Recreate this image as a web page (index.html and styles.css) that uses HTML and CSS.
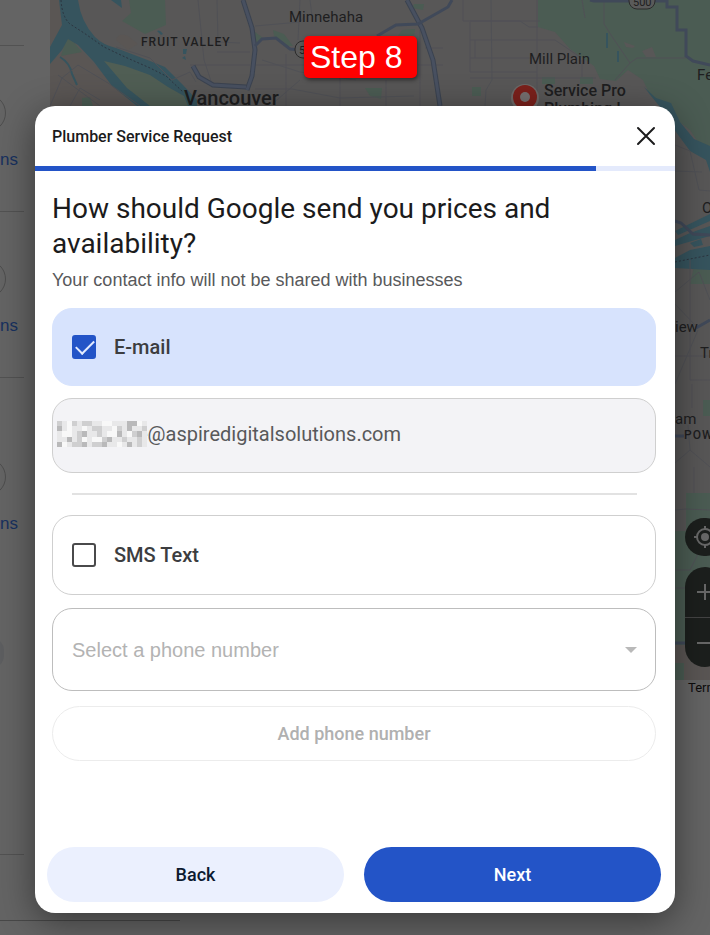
FILE: index.html
```html
<!DOCTYPE html>
<html lang="en">
<head>
<meta charset="utf-8">
<meta name="viewport" content="width=device-width, initial-scale=1">
<title>Plumber Service Request</title>
<link rel="stylesheet" href="styles.css">
</head>
<body>
<div class="backdrop">
  <ul class="results">
    <li class="result result-first"></li>
    <li class="result"><span class="ring"></span><a class="directions" href="#">ns</a></li>
    <li class="result"><span class="ring"></span><a class="directions" href="#">ns</a></li>
    <li class="result result-tall"><span class="ring"></span><a class="directions" href="#">ns</a><span class="dot"></span></li>
    <li class="result-footer"></li>
  </ul>
  <div class="map-pane">
    <svg class="map" viewBox="50 0 660 680" preserveAspectRatio="xMinYMin slice" role="img" aria-label="Map">
      <rect class="land" x="50" y="0" width="2000" height="680"/>
      <path class="sand" d="M50 0H60L63 25 50 45ZM50 64L60 54 82 52 135 106H50Z"/>
      <path class="sand" d="M116 40Q118 32 128 36L138 44 128 50Z"/>
      <path class="green" d="M129 0H165L166 25 145 34 122 21 131 13ZM66 39H71L82 52 61 56ZM82 98L90 97 93 106H82Z"/>
      <path class="green" d="M538 0H2050V160H710L690 130 664 110 650 95 643 80 628 70 616 81 600 79 594 66 570 49 555 32 538 27Z"/>
      <path class="green" d="M542 77H555V84H542ZM580 77H593V84H580ZM472 87H481V96H472ZM365 88H382L381 99 370 96ZM273 30L284 34 293 46 286 46 274 36ZM255 32L263 38 255 43ZM414 4L424 4 423 10 412 8ZM402 30L415 29 414 37 398 36Z"/>
      <path class="land" d="M624 42L635 46 633 48 626 47ZM642 51L652 47 656 57 646 57Z"/>
      <path class="green" d="M686 493H2050V645H675V531H686ZM703 400H710V416H703ZM695 262H710V284H690Z"/>
      <path class="sand" d="M675 645H710V680H675Z"/>
      <path class="green" d="M675 663H684V680H675Z"/>
      <path class="water" d="M59 0H78Q81 22 95 37 103 45 116 48L150 61 165 67 183 85 197 100V106H137L112 86 94 62 78 45 68 39 62 50 50 64V47L62 25Z"/>
      <path class="island" d="M104 61L125 66 150 75 168 87 184 96 188 106H150L127 88Z"/>
      <path class="water" d="M111 0L122 8 121 0ZM157 31Q160 29 163 34L161 35ZM183 49H187L186 54H183ZM182 58L185 56 186 60ZM606 33H608V48H606ZM617 51H619V62H617Z"/>
      <path class="water" d="M644 87L656 98 671 103 680 122 694 139 710 146V172L706 160 690 151 676 132 664 112Z"/>
      <path class="water" d="M675 240L690 233 710 226V236L692 241 675 246ZM675 258L690 250 710 246V270L675 268ZM675 231L710 214V221L678 235ZM690 243L701 239 703 245 694 247Z"/>
      <path class="stream" d="M60 57Q70 63 72 74L77 85M140 106Q136 101 143 102"/>
      <path class="border-line" d="M61 0Q62 17 70 24L84 33 104 47 125 57 150 68 166 76 183 92M675 262L710 255"/>
      <g class="street">
        <path d="M50 106L62 78 78 65 108 83 140 106M58 75L100 106M70 106L80 88 100 100M116 47L150 58 172 80 190 72 196 82M198 0L204 60 212 84M217 0L218 42 240 43M190 65H250M217 52H250M300 0L298 40M255 26L300 22 305 16M310 0L312 16M255 65H304M262 60L300 72 356 80M270 106L300 80M286 106V54M340 78V106M420 30V106M418 65H443M463 0V21H540M470 22V72H537M386 106V80M425 48H443M255 89H292L340 98 414 96"/>
        <path d="M491 0L492 80 486 90 485 106M470 21H520L529 27H538M470 40H555L580 57M537 0V106M470 58H540M470 78H596M475 40V58M604 0V24L613 38 630 63 637 58H686M630 63L615 80M582 0L585 18M582 60V77"/>
        <path d="M675 145L690 151 699 190 710 191M675 171L702 172M675 292L699 272 710 300M675 304L695 325M690 260V380H710M675 356H710M675 384L698 330M692 384V408M675 463L690 450 688 425M690 450L710 467M675 510L686 509 710 510M694 467V493M700 550L690 570H675M675 588H710"/>
      </g>
      <path class="highway-edge" d="M243 0L252 28 255 50 252 76 247 90M193 66L199 77 213 85 246 87M407 0L422 28 433 60 440 106"/>
      <path class="highway" d="M243 0L252 28 255 50 252 76 247 90M193 66L199 77 213 85 246 87M407 0L422 28 433 60 440 106"/>
      <path class="route" d="M255 46L262 39 276 38 290 49 300 50M377 36L396 25 418 24 448 7 452 0M590 0L594 1H667V7H677V30H686V56L693 61 710 65M675 221L681 223 693 234 710 235M696 328L710 320M675 436H684M675 643H710"/>
      <rect class="shield" x="295" y="41" width="24" height="17" rx="8"/>
      <text class="shield-text" x="299" y="54">5</text>
      <rect class="shield" x="629" y="-8" width="26" height="17" rx="8"/>
      <text class="shield-text" x="633" y="6">500</text>
      <g class="place">
        <text x="289" y="22">Minnehaha</text>
        <text x="529" y="64">Mill Plain</text>
        <text x="697" y="80">Fe</text>
        <text x="702" y="213">O</text>
        <text x="675" y="332">iew</text>
        <text x="700" y="358">Tr</text>
        <text x="675" y="424">am</text>
      </g>
      <text class="district" x="141" y="46">FRUIT VALLEY</text>
      <text class="district" x="684" y="439">POW</text>
      <text class="city" x="184" y="105">Vancouver</text>
      <circle class="pin-halo" cx="525" cy="98" r="14"/>
      <circle class="pin" cx="525" cy="97" r="12"/>
      <circle class="pin-eye" cx="525" cy="97" r="5"/>
      <text class="business" x="544" y="96">Service Pro</text>
      <text class="business" x="544" y="114">Plumbing I</text>
    </svg>
    <div class="map-controls">
      <button class="locate" type="button" aria-label="Show your location">
        <svg viewBox="0 0 24 24" width="24" height="24"><circle cx="12" cy="12" r="8"/><circle class="core" cx="12" cy="12" r="4"/><path d="M12 1v3M12 20v3M1 12h3M20 12h3"/></svg>
      </button>
      <div class="zoom">
        <button type="button" aria-label="Zoom in"><svg viewBox="0 0 20 20" width="20" height="20"><path d="M10 2v16M2 10h16"/></svg></button>
        <button type="button" aria-label="Zoom out"><svg viewBox="0 0 20 20" width="20" height="20"><path d="M2 10h16"/></svg></button>
      </div>
      <a class="terms" href="#">Terms</a>
    </div>
  </div>
</div>

<div class="step-badge">Step 8</div>

<main class="dialog" role="dialog" aria-labelledby="dialog-title">
  <header class="dialog-header">
    <h1 class="dialog-title" id="dialog-title">Plumber Service Request</h1>
    <button class="close" type="button" aria-label="Close">
      <svg viewBox="0 0 20 20" width="20" height="20"><path d="M2 2L18 18M18 2L2 18"/></svg>
    </button>
  </header>
  <div class="progress"><div class="progress-value"></div></div>
  <form class="form">
    <h2 class="question">How should Google send you prices and availability?</h2>
    <p class="hint">Your contact info will not be shared with businesses</p>

    <label class="option option-selected">
      <input class="check" type="checkbox" checked>
      <span>E-mail</span>
    </label>
    <div class="email-field">
      <svg class="mosaic" viewBox="0 0 18 5" width="90" height="26" preserveAspectRatio="none" shape-rendering="crispEdges" aria-hidden="true">
        <path fill="#e8e8e9" d="M0 0H18V5H0Z"/>
        <path fill="#f8f8f8" d="M2 0h1v2h-1zM5 1h1v1h-1zM9 0h2v1h-2zM1 2h2v1h-2zM7 3h2v1h-2zM11 1h1v2h-1zM14 2h1v1h-1zM1 4h1v1h-1zM5 3h1v1h-1zM12 4h1v1h-1zM16 0h1v1h-1zM10 2h1v1h-1z"/>
        <path fill="#cfcfd0" d="M0 0h1v1h-1zM3 0h1v1h-1zM5 0h2v1h-2zM8 1h1v2h-1zM12 1h1v1h-1zM15 2h1v1h-1zM4 2h1v2h-1zM7 1h1v1h-1zM9 3h2v1h-2zM16 3h1v2h-1zM3 4h2v1h-2zM7 4h2v1h-2zM17 1h1v1h-1zM13 3h1v1h-1z"/>
        <path fill="#b9b9ba" d="M0 1h1v1h-1zM2 3h1v1h-1zM5 2h1v1h-1zM12 2h1v1h-1zM14 0h2v1h-2zM14 1h1v1h-1zM9 4h1v1h-1zM14 4h1v1h-1zM10 3h1v1h-1zM5 4h1v1h-1zM0 4h1v1h-1zM16 2h1v1h-1z"/>
      </svg>
      <input class="email-input" type="email" aria-label="E-mail address" value="e@aspiredigitalsolutions.com" readonly>
    </div>

    <hr class="divider">

    <label class="option">
      <input class="check" type="checkbox">
      <span>SMS Text</span>
    </label>
    <div class="select-field">
      <select class="select" aria-label="Phone number">
        <option>Select a phone number</option>
      </select>
      <svg class="caret" viewBox="0 0 12 6" width="12" height="6" aria-hidden="true"><path d="M0 0H12L6 6Z"/></svg>
    </div>
    <button class="add-phone" type="button" disabled>Add phone number</button>
  </form>
  <footer class="actions">
    <button class="button button-back" type="button">Back</button>
    <button class="button button-next" type="button">Next</button>
  </footer>
</main>
</body>
</html>
```
FILE: styles.css
```css
* {
  box-sizing: border-box;
}

body {
  position: relative;
  display: flex;
  min-height: 100vh;
  margin: 0;
  padding: 106px 35px 22px;
  overflow: hidden;
  background: #646464;
  color: #1b1b1c;
  font-family: Roboto, "Liberation Sans", sans-serif;
}

button,
input,
select {
  font: inherit;
}

button {
  padding: 0;
  border: 0;
  cursor: pointer;
}

/* Page behind the dialog */

.backdrop {
  position: absolute;
  inset: 0;
  display: flex;
  overflow: hidden;
}

.results {
  display: flex;
  flex: none;
  flex-direction: column;
  width: 50px;
  margin: 0;
  padding: 0;
  list-style: none;
}

.result {
  display: flex;
  flex-direction: column;
  width: 24px;
  height: 166px;
  padding-top: 48px;
  border-bottom: 1px solid #525252;
}

.result-first {
  height: 46px;
  padding: 0;
}

.result-tall {
  height: 477px;
  padding-top: 80px;
}

.result-footer {
  width: 180px;
  height: 66px;
  border-bottom: 1px solid #484848;
}

.ring {
  width: 38px;
  height: 38px;
  margin-left: -32px;
  border: 1px solid #4d4d4d;
  border-radius: 19px;
}

.directions {
  margin-top: 18px;
  color: #18315f;
  font: 17px/20px "Liberation Sans", sans-serif;
  text-decoration: none;
}

.dot {
  width: 28px;
  height: 32px;
  margin: 103px 0 0 -24px;
  border-radius: 16px;
  background: #5d5e60;
}

.map-pane {
  position: relative;
  flex: 1;
  min-width: 0;
}

.map {
  display: block;
  width: 100%;
  height: 680px;
}

.land { fill: #585757; }
.sand { fill: #5a5654; }
.green { fill: #4b5c53; }
.island { fill: #505e54; }
.water { fill: #36545e; }
.stream { fill: none; stroke: #36545e; stroke-width: 2; }
.border-line { fill: none; stroke: #2c3540; stroke-width: 1; stroke-dasharray: 2 2; }
.street { fill: none; stroke: #505156; stroke-width: 1; }
.highway-edge { fill: none; stroke: #3b4350; stroke-width: 5; }
.highway { fill: none; stroke: #485060; stroke-width: 3; }
.route { fill: none; stroke: #404959; stroke-width: 3; }
.shield { fill: #5a5a5a; stroke: #2b2b2b; stroke-width: 1; }

.map text {
  fill: #1e1e1f;
  font-family: Roboto, sans-serif;
}

.map .shield-text { font-size: 11px; }
.map .place { font-size: 15px; }
.map .district { font-size: 12px; font-weight: 500; letter-spacing: 1px; }
.map .city { font-size: 20px; font-weight: 500; }
.map .business { font-size: 16px; font-weight: 500; }

.pin-halo { fill: #6d6968; }
.pin { fill: #7b201b; }
.pin-eye { fill: #767070; }

.map-controls {
  position: absolute;
  top: 518px;
  right: -15px;
  display: flex;
  flex-direction: column;
  align-items: center;
}

.map-controls button {
  display: grid;
  place-items: center;
  width: 40px;
  background: #1c1f1d;
}

.map-controls svg {
  fill: none;
  stroke: #686868;
  stroke-width: 2;
}

.map-controls .core {
  fill: #686868;
  stroke: none;
}

.map-controls .locate {
  height: 38px;
  border-radius: 20px;
}

.zoom {
  margin: 11px 0;
  overflow: hidden;
  border-radius: 20px;
}

.zoom button {
  height: 50px;
}

.zoom button + button {
  border-top: 1px solid #444;
}

.terms {
  align-self: flex-start;
  margin-left: 3px;
  color: #0c0c0c;
  font-size: 13px;
  line-height: 20px;
  text-decoration: none;
}

.step-badge {
  position: absolute;
  top: 36px;
  left: 304px;
  padding: 0 14px 0 6px;
  border-radius: 5px;
  background: #f00;
  box-shadow: 1px 2px 4px rgba(0, 0, 0, 0.5);
  color: #fff;
  font: 32px/42px "Liberation Sans", sans-serif;
}

/* Dialog */

.dialog {
  position: relative;
  display: flex;
  flex: 1;
  flex-direction: column;
  min-width: 0;
  border-radius: 20px;
  background: #fff;
  box-shadow: 0 8px 36px rgba(0, 0, 0, 0.45);
}

.dialog-header {
  display: flex;
  align-items: center;
  justify-content: space-between;
  height: 60px;
  padding: 0 19px 0 17px;
}

.dialog-title {
  margin: 0;
  font-size: 16px;
  font-weight: 500;
}

.close {
  display: grid;
  background: none;
}

.close svg {
  fill: none;
  stroke: #1b1b1c;
  stroke-width: 2;
  stroke-linecap: round;
}

.progress {
  height: 5px;
  background: #e4eafc;
}

.progress-value {
  width: 88%;
  max-width: 561px;
  height: 100%;
  background: #2354c7;
}

.form {
  display: flex;
  flex: 1;
  flex-direction: column;
  padding: 20px 19px 0 17px;
}

.question {
  margin: 0;
  font-size: 28px;
  font-weight: 400;
  line-height: 35px;
}

.hint {
  margin: 8px 0 17px;
  color: #58595b;
  font: 18px/22px "Liberation Sans", sans-serif;
}

.option {
  display: flex;
  align-items: center;
  gap: 18px;
  height: 80px;
  padding: 0 19px;
  border: 1px solid #cfcfcf;
  border-radius: 20px;
  color: #3c3d40;
  font-size: 20px;
  font-weight: 500;
}

.option-selected {
  height: 78px;
  border-color: #d7e3fd;
  background: #d7e3fd;
}

.check {
  width: 24px;
  height: 24px;
  margin: 0;
  border: 2px solid #4a4a4b;
  border-radius: 3px;
  appearance: none;
}

.check:checked {
  border-color: #2354c7;
  background: #2354c7;
}

.check:checked::before {
  display: block;
  width: 16px;
  height: 8px;
  margin: 4px 2px;
  border: solid #e4ecff;
  border-width: 0 0 2px 2px;
  content: "";
  transform: translateY(-1px) rotate(-45deg);
}

.email-field {
  display: flex;
  align-items: center;
  height: 75px;
  margin-top: 12px;
  padding: 0 4px 3px;
  border: 1px solid #cfcfcf;
  border-radius: 20px;
  background: #f3f3f6;
}

.mosaic {
  position: relative;
  flex: none;
}

.email-input {
  flex: 1;
  min-width: 0;
  margin-left: -10px;
  padding: 0;
  border: 0;
  background: none;
  color: #58595b;
  font-size: 20px;
}

.divider {
  width: calc(100% - 39px);
  height: 2px;
  margin: 20px auto;
  border: 0;
  background: #e2e2e2;
}

.select-field {
  display: grid;
  align-items: center;
  height: 83px;
  margin-top: 13px;
  border: 1px solid #bdbdbd;
  border-radius: 20px;
}

.select,
.caret {
  grid-area: 1 / 1;
}

.select {
  width: 100%;
  height: 100%;
  padding: 0 40px 0 19px;
  border: 0;
  background: none;
  color: #b3b3b3;
  font: 20px "Liberation Sans", sans-serif;
  appearance: none;
}

.caret {
  justify-self: end;
  margin-right: 18px;
  fill: #b9b9b9;
  pointer-events: none;
}

.add-phone {
  height: 55px;
  margin-top: 15px;
  border: 1px solid #ececec;
  border-radius: 28px;
  background: none;
  color: #b0b0b0;
  font-size: 18px;
  font-weight: 500;
}

.actions {
  display: flex;
  gap: 20px;
  padding: 20px 14px 11px 12px;
}

.button {
  flex: 1;
  height: 55px;
  border-radius: 28px;
  font-size: 18px;
  font-weight: 500;
}

.button-back {
  background: #ebf0fe;
  color: #0b1a30;
}

.button-next {
  background: #2354c7;
  color: #fff;
}
```
